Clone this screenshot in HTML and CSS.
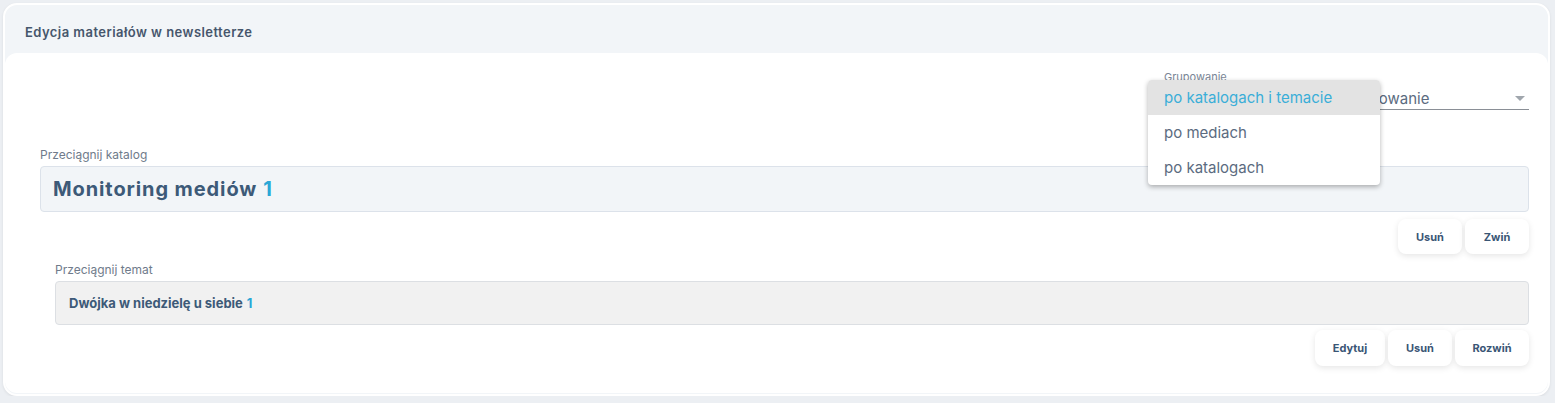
FILE: index.html
```html
<!DOCTYPE html>
<html lang="pl">
<head>
    <meta charset="UTF-8">
    <meta name="viewport" content="width=device-width, initial-scale=1.0">
    <title>Edycja materiałów w newsletterze</title>
    <link rel="stylesheet" href="styles.css">
</head>
<body>
    <div class="panel">
        <div class="panel-header">Edycja materiałów w newsletterze</div>

        <div class="panel-body">
            <div class="toolbar">
                <div class="select-field">
                    <label class="select-label">Grupowanie</label>
                    <div class="select-value">
                        <span>Bez grupowanie</span>
                        <span class="select-arrow"></span>
                    </div>

                    <ul class="select-menu">
                        <li class="active">po katalogach i temacie</li>
                        <li>po mediach</li>
                        <li>po katalogach</li>
                    </ul>
                </div>
            </div>

            <div class="catalog">
                <div class="drag-label">Przeciągnij katalog</div>
                <div class="catalog-box">Monitoring mediów <span class="count">1</span></div>
                <div class="actions">
                    <button class="btn">Usuń</button>
                    <button class="btn">Zwiń</button>
                </div>

                <div class="topic">
                    <div class="drag-label">Przeciągnij temat</div>
                    <div class="topic-box">Dwójka w niedzielę u siebie <span class="count">1</span></div>
                    <div class="actions">
                        <button class="btn btn-edit">Edytuj</button>
                        <button class="btn">Usuń</button>
                        <button class="btn btn-expand">Rozwiń</button>
                    </div>
                </div>
            </div>
        </div>
    </div>
</body>
</html>
```

FILE: styles.css
```css
* {
    margin: 0;
    padding: 0;
    box-sizing: border-box;
    font-family: 'Inter', 'Noto Sans', sans-serif;
}

body {
    background: #eceff3;
    padding: 3px 5px 0 3px;
}

.panel {
    background: #f2f5f8;
    border: 2px solid #ffffff;
    border-radius: 14px;
    height: 393px;
    box-shadow: 0 1px 3px rgba(0, 0, 0, 0.08);
}

.panel-header {
    height: 48px;
    padding: 19px 0 0 20px;
    font-size: 13px;
    font-weight: 600;
    letter-spacing: 0.45px;
    color: #46566c;
}

.panel-body {
    background: #ffffff;
    border-radius: 12px;
    height: 340px;
    padding: 0 19px 0 35px;
}

.toolbar {
    display: flex;
    justify-content: flex-end;
    padding-top: 17px;
    height: 95px;
}

.select-field {
    position: relative;
    width: 365px;
}

.select-label {
    display: block;
    font-size: 11px;
    color: #7a8696;
    height: 16px;
}

.select-value {
    display: flex;
    align-items: center;
    justify-content: space-between;
    height: 24px;
    border-bottom: 1px solid #8a8f96;
    font-size: 15px;
    color: #5b6b80;
    padding-top: 2px;
}

.select-value span:first-child {
    padding-left: 151px;
}

.select-arrow {
    width: 0;
    height: 0;
    border-left: 5px solid transparent;
    border-right: 5px solid transparent;
    border-top: 5px solid #a0a6ad;
    margin-right: 4px;
}

.select-menu {
    position: absolute;
    left: -16px;
    top: 10px;
    width: 232px;
    list-style: none;
    background: #ffffff;
    border-radius: 4px;
    box-shadow: 0 2px 5px rgba(0, 0, 0, 0.3);
    overflow: hidden;
    z-index: 2;
}

.select-menu li {
    height: 35px;
    line-height: 35px;
    padding-left: 16px;
    font-size: 15px;
    color: #5b6b80;
}

.select-menu li.active {
    background: #e3e3e3;
    color: #3aaed8;
}

.drag-label {
    font-size: 12px;
    color: #6f7b8b;
    height: 18px;
    line-height: 14px;
}

.catalog-box {
    height: 46px;
    background: #f2f5f8;
    border: 1px solid #dce2ea;
    border-radius: 4px;
    padding-left: 12px;
    display: flex;
    align-items: center;
    font-size: 20px;
    font-weight: 700;
    letter-spacing: 0.9px;
    color: #3d5a78;
}

.count {
    color: #2ba7d6;
    margin-left: 6px;
}

.topic-box .count {
    margin-left: 4px;
}

.actions {
    display: flex;
    justify-content: flex-end;
    gap: 3px;
    margin-top: 7px;
}

.btn {
    width: 64px;
    height: 35px;
    border: none;
    background: #ffffff;
    border-radius: 8px;
    box-shadow: 0 2px 6px rgba(0, 0, 0, 0.1);
    font-size: 11px;
    font-weight: 700;
    color: #3a5675;
    cursor: pointer;
}

.btn-edit {
    width: 70px;
}

.btn-expand {
    width: 74px;
}

.topic {
    margin-left: 15px;
    margin-top: 9px;
}

.topic-box {
    height: 44px;
    background: #f1f1f1;
    border: 1px solid #dcdfe3;
    border-radius: 4px;
    padding-left: 13px;
    display: flex;
    align-items: center;
    font-size: 13px;
    font-weight: 700;
    color: #3d5a78;
}

.topic .actions {
    margin-top: 5px;
}

.topic .btn {
    height: 36px;
}
```
